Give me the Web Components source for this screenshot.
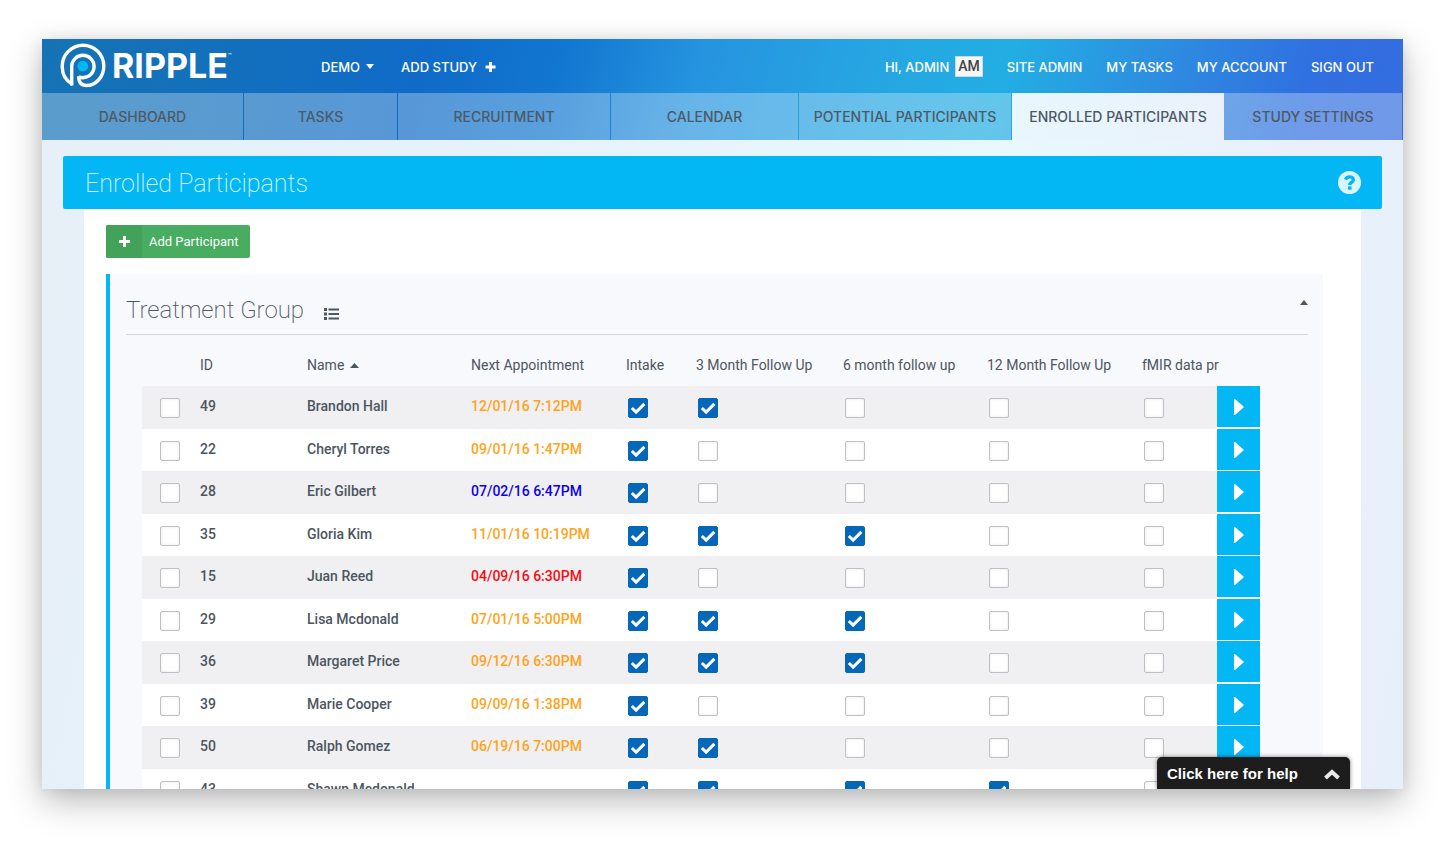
<!DOCTYPE html>
<html lang="en">
<head>
<meta charset="utf-8">
<title>Ripple – Enrolled Participants</title>
<style>
  html, body { height: 100%; margin: 0; }
  body { background: #fff; font-family: Roboto, "Liberation Sans", sans-serif; color: #4d565f; }
</style>
</head>
<body>
<ripple-app></ripple-app>

<script>
const define = (name, html, setup) => {
  const template = document.createElement('template');
  template.innerHTML = html;
  customElements.define(name, class extends HTMLElement {
    connectedCallback() {
      if (this.shadowRoot) return;
      this.attachShadow({ mode: 'open' }).append(template.content.cloneNode(true));
      if (setup) setup(this, this.shadowRoot);
    }
  });
};

define('ripple-logo', `
<style>
  :host { display: block; }
  a { display: flex; align-items: center; gap: 6px; color: #fff; text-decoration: none; }
  svg { width: 46px; height: 46px; display: block; }
  span { font: 700 34px/40px Inter, "Liberation Sans", sans-serif; }
  sup { font: 500 6px/8px Inter, sans-serif; vertical-align: top; position: relative; top: 6px; }
</style>
<a href="#" aria-label="Ripple">
  <svg viewBox="0 0 46 46" fill="none" stroke="#fff" stroke-width="3.4">
    <path d="M11.700 42.600V23.500a11.200 11.200 0 1 1 11.200 11.200c-1.600 0-2.800-.3-4.200-1"/>
    <path d="M12.600 41.400C6.500 38 2.200 31.500 2.200 23.500 2.200 11.500 11.500 2.200 23 2.200S43.800 11.500 43.800 23.200c0 11-8.300 19.300-17.300 19.300-5.200 0-7.800-3.500-7.800-9.300"/>
    <circle cx="22.800" cy="23.200" r="5.400" fill="#00b7f5" stroke="none"/>
  </svg>
  <span>RIPPLE<sup>™</sup></span>
</a>`);

define('top-bar', `
<style>
  :host { display: flex; align-items: center; height: 54px; padding: 0 29px 0 18px;
    box-sizing: border-box; font: 500 13px/20px Inter, "Liberation Sans", sans-serif; color: #fff; white-space: nowrap; }
  ripple-logo { width: 261px; flex: none; }
  nav { display: flex; align-items: center; gap: 27px; padding-top: 1px; }
  nav.user { margin-left: auto; gap: 24px; }
  a { color: inherit; text-decoration: none; display: flex; align-items: center; gap: 6px; }
  svg { display: block; fill: currentColor; }
  b { font: 500 14px/19px Roboto, sans-serif; color: #444; background: #f7f7f8; border: 1px solid #c5dcea; padding: 0 2px; }
</style>
<ripple-logo></ripple-logo>
<nav aria-label="Study">
  <a href="#">DEMO <svg width="8" height="5" viewBox="0 0 8 5"><path d="M0 0h8L4 5z"/></svg></a>
  <a href="#">ADD STUDY <svg width="14" height="12" viewBox="0 0 14 12"><path d="M6 1h3v3.500H12.500v3H9V11H6V7.500H2.500v-3H6z"/></svg></a>
</nav>
<nav class="user" aria-label="Account">
  <a href="#">HI, ADMIN <b>AM</b></a>
  <a href="#">SITE ADMIN</a><a href="#">MY TASKS</a><a href="#">MY ACCOUNT</a><a href="#">SIGN OUT</a>
</nav>`);

define('tab-bar', `
<style>
  nav { display: grid; grid-template-columns: 202fr 154fr 213fr 188fr 213fr 212fr 179fr; height: 47px; }
  :host { display: block; }
  a { display: flex; align-items: center; justify-content: center; box-sizing: border-box; padding-top: 1px;
    font: 500 14px/20px Inter, "Liberation Sans", sans-serif; color: #4d5966; text-decoration: none; white-space: nowrap;
    background: rgba(255,255,255,.3); background-clip: padding-box; border-right: 1px solid transparent; }
  a[aria-current] { background: linear-gradient(90deg, #e8f7fd, #eaf1fb); border-right: 0; }
</style>
<nav aria-label="Sections">
  <a href="#">DASHBOARD</a><a href="#">TASKS</a><a href="#">RECRUITMENT</a><a href="#">CALENDAR</a>
  <a href="#">POTENTIAL PARTICIPANTS</a><a href="#" aria-current="page">ENROLLED PARTICIPANTS</a><a href="#">STUDY SETTINGS</a>
</nav>`);

define('page-title', `
<style>
  :host { display: flex; align-items: center; justify-content: space-between; height: 53px; padding: 0 21px 0 22px;
    background: #03b7f5; border-radius: 2px; color: #d9f4fe; }
  h1 { margin: 0; padding-top: 2px; font-weight: 200; font-size: 25px; line-height: 32px; }
  button { border: 0; padding: 0; background: none; color: inherit; }
  svg { display: block; }
</style>
<h1><slot></slot></h1>
<button aria-label="Help"><svg width="23" height="23" viewBox="0 0 23 23"><circle cx="11.500" cy="11.500" r="11.500" fill="currentColor"/><path d="M7.500 8.600C8.200 6.600 9.600 5.900 11.400 5.900c2.200 0 3.900 1.200 3.900 3 0 2.500-3.600 2.600-3.600 5" fill="none" stroke="#03b7f5" stroke-width="3.400"/><path d="M10 15.300h3.500v3.400H10z" fill="#03b7f5"/></svg></button>`);

define('add-button', `
<style>
  :host { display: block; }
  button { display: flex; align-items: center; height: 33px; padding: 0 12px 0 0; gap: 7px; border: 0; border-radius: 2px;
    background: #48ad61; color: #fff; font: 400 13px/20px Roboto, sans-serif; overflow: hidden; }
  i { display: grid; place-items: center; width: 36px; height: 33px; background: #42a25a; }
</style>
<button><i><svg width="11" height="11" viewBox="0 0 11 11" fill="#fff"><path d="M4 0h3v4h4v3H7v4H4V7H0V4h4z"/></svg></i><slot></slot></button>`);

define('participant-table', `
<style>
  :host { display: block; }
  table { width: 100%; table-layout: fixed; border-collapse: collapse; }
  th, td { padding: 0 0 0 8px; text-align: left; white-space: nowrap; }
  th { height: 41px; padding-bottom: 2px; box-sizing: border-box; font-weight: 400; font-size: 14px; line-height: 20px; }
  th svg { margin-left: 6px; vertical-align: middle; fill: currentColor; }
  td { font-weight: 500; font-size: 14px; line-height: 20px; vertical-align: top; padding-top: 10px; box-sizing: border-box; }
  tbody tr { background: #fff; height: 42px; }
  tbody tr:nth-child(odd) { background: #f0f0f2; height: 43px; }
  td.pick { padding-left: 18px; }
  td.visit { padding-left: 10px; }
  td.pick, td.visit { padding-top: 12px; }
  input { appearance: none; display: block; width: 20px; height: 20px; margin: 0; box-sizing: border-box;
    border: 1px solid #bfc0c3; border-radius: 2px; background: #fff; box-shadow: inset 0 0 3px rgba(0,0,0,.1); }
  input:checked { border-color: #0467b8; box-shadow: none;
    background: #0467b8 url("data:image/svg+xml,%3Csvg xmlns='http://www.w3.org/2000/svg' viewBox='0 0 19 19'%3E%3Cpath d='M3 9.500l4.500 4.300 8.700-8.600' fill='none' stroke='white' stroke-width='3.200'/%3E%3C/svg%3E"); }
  .orange { color: #ffa31a; } .blue { color: #0c00f0; } .red { color: #fb0a12; }
  td.go { padding: 0; }
  td.go button { display: grid; place-items: center; width: 100%; height: 41px; padding: 0; border: 0; background: #03b7f5; }
  tr:nth-child(odd) td.go { background: #fff; }
</style>
<table>
  <colgroup><col style="width:50px"><col style="width:107px"><col style="width:164px"><col style="width:155px"><col style="width:70px"><col style="width:147px"><col style="width:144px"><col style="width:155px"><col style="width:83px"><col style="width:43px"></colgroup>
  <thead><tr><th></th><th>ID</th><th>Name<svg width="9" height="5" viewBox="0 0 9 5"><path d="M0 5h9L4.500 0z"/></svg></th><th>Next Appointment</th><th>Intake</th><th>3 Month Follow Up</th><th>6 month follow up</th><th>12 Month Follow Up</th><th>fMIR data pr</th><th></th></tr></thead>
  <tbody></tbody>
</table>`, (host, root) => {
  const visits = ['Intake', '3 Month Follow Up', '6 month follow up', '12 Month Follow Up', 'fMIR data'];
  const people = [
    [49, 'Brandon Hall', '12/01/16 7:12PM', 'orange', 2],
    [22, 'Cheryl Torres', '09/01/16 1:47PM', 'orange', 1],
    [28, 'Eric Gilbert', '07/02/16 6:47PM', 'blue', 1],
    [35, 'Gloria Kim', '11/01/16 10:19PM', 'orange', 3],
    [15, 'Juan Reed', '04/09/16 6:30PM', 'red', 1],
    [29, 'Lisa Mcdonald', '07/01/16 5:00PM', 'orange', 3],
    [36, 'Margaret Price', '09/12/16 6:30PM', 'orange', 3],
    [39, 'Marie Cooper', '09/09/16 1:38PM', 'orange', 1],
    [50, 'Ralph Gomez', '06/19/16 7:00PM', 'orange', 2],
    [43, 'Shawn Mcdonald', '', 'orange', 4],
  ];
  root.querySelector('tbody').innerHTML = people.map(([id, name, date, tone, done]) => `
    <tr><td class="pick"><input type="checkbox" aria-label="Select ${name}"></td>
    <td>${id}</td><td>${name}</td><td class="${tone}">${date}</td>
    ${visits.map((v, i) => `<td class="visit"><input type="checkbox" aria-label="${v}, ${name}"${i < done ? ' checked' : ''}></td>`).join('')}
    <td class="go"><button aria-label="Open ${name}"><svg width="10" height="16" viewBox="0 0 10 16"><path d="M1 0l9 8-9 8H0V0z" fill="#fff"/></svg></button></td></tr>`).join('');
});

define('group-panel', `
<style>
  :host { display: block; background: #f8f9fd; border-left: 4px solid #03b7f5; padding: 0 15px 0 16px; }
  header { display: flex; align-items: center; height: 60px; border-bottom: 1px solid #d5d7dc; margin-bottom: 10px; gap: 20px; }
  h2 { margin: 12px 0 0; font-weight: 200; font-size: 24px; line-height: 32px; }
  button { border: 0; padding: 0; background: none; color: inherit; }
  .list { margin-top: 20px; }
  .fold { margin-left: auto; margin-bottom: 4px; }
  svg { display: block; fill: currentColor; }
  .body { padding: 0 48px 0 16px; }
</style>
<header>
  <h2><slot name="title"></slot></h2>
  <button class="list" aria-label="List options"><svg width="15" height="12" viewBox="0 0 15 12"><path d="M0 0h3v3H0zM0 4.500h3v3H0zM0 9h3v3H0zM4.500.500H15v2H4.500zM4.500 5H15v2H4.500zM4.500 9.500H15v2H4.500z"/></svg></button>
  <button class="fold" aria-label="Collapse"><svg width="8" height="5" viewBox="0 0 8 5"><path d="M0 5h8L4 0z"/></svg></button>
</header>
<div class="body"><slot></slot></div>`);

define('help-tab', `
<style>
  :host { position: absolute; right: 53px; bottom: 0; }
  button { display: flex; align-items: center; justify-content: space-between; width: 193px; height: 32px; padding: 2px 10px 0;
    border: 0; border-radius: 5px 5px 0 0; background: #1d1d1d; color: #fff; box-shadow: 0 0 4px rgba(0,0,0,.5);
    font: 700 15px/20px "Liberation Sans", Arial, sans-serif; white-space: nowrap; }
</style>
<button>Click here for help <svg width="16" height="11" viewBox="0 0 16 11"><path d="M1.500 9L8 3l6.500 6" fill="none" stroke="#e8e8e8" stroke-width="4"/></svg></button>`);

define('ripple-app', `
<style>
  :host { display: block; box-sizing: border-box; height: 100vh; padding: 39px 53px 59px 42px; }
  .window { position: relative; height: 100%; overflow: hidden; display: flex; flex-direction: column;
    background: linear-gradient(100deg, #e7f0f7 0%, #e6f1fc 30%, #e8f8fe 66%, #e9f0fb 85%, #e7f0fa 100%); }
  .shade { height: 100%; box-shadow: 0 12px 32px rgba(0,0,0,.27), 0 0 14px rgba(0,0,0,.08); }
  .top { flex: none; background: linear-gradient(105deg, #1573b5 0%, #1370bb 12%, #0f6bc7 28%, #1277d0 38%, #2694e0 48%, #26a5e2 60%, #22aee3 70%, #2d8ee0 81%, #3070e0 92%, #346ce0 100%); }
  main { flex: 1; min-height: 0; display: flex; flex-direction: column; padding: 16px 21px 0; }
  page-title { flex: none; }
  .sheet { flex: 1; min-height: 0; overflow: hidden; background: #fff; margin: 0 21px; padding: 16px 38px 0 22px; display: grid; gap: 16px; align-content: start; }
</style>
<div class="shade"><div class="window">
  <div class="top"><top-bar></top-bar><tab-bar></tab-bar></div>
  <main>
    <page-title>Enrolled Participants</page-title>
    <div class="sheet">
      <add-button>Add Participant</add-button>
      <group-panel><span slot="title">Treatment Group</span><participant-table></participant-table></group-panel>
    </div>
  </main>
  <help-tab></help-tab>
</div></div>`);
</script>
</body>
</html>
